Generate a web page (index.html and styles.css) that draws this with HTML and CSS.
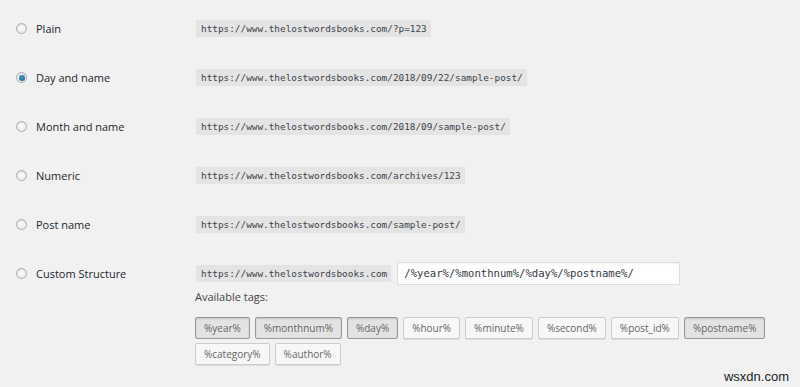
FILE: index.html
```html
<!DOCTYPE html>
<html lang="en">
<head>
<meta charset="utf-8">
<title>Permalink Settings</title>
<link rel="stylesheet" href="styles.css">
</head>
<body>
<div class="permalinks">
  <div class="row">
    <label class="choice"><span class="radio"></span><span class="label">Plain</span></label>
    <code class="url">https://www.thelostwordsbooks.com/?p=123</code>
  </div>
  <div class="row">
    <label class="choice"><span class="radio checked"></span><span class="label">Day and name</span></label>
    <code class="url">https://www.thelostwordsbooks.com/2018/09/22/sample-post/</code>
  </div>
  <div class="row">
    <label class="choice"><span class="radio"></span><span class="label">Month and name</span></label>
    <code class="url">https://www.thelostwordsbooks.com/2018/09/sample-post/</code>
  </div>
  <div class="row">
    <label class="choice"><span class="radio"></span><span class="label">Numeric</span></label>
    <code class="url">https://www.thelostwordsbooks.com/archives/123</code>
  </div>
  <div class="row">
    <label class="choice"><span class="radio"></span><span class="label">Post name</span></label>
    <code class="url">https://www.thelostwordsbooks.com/sample-post/</code>
  </div>
  <div class="row custom">
    <label class="choice custom-choice"><span class="radio"></span><span class="label">Custom Structure</span></label>
    <div class="custom-body">
      <div class="custom-line">
        <code class="url">https://www.thelostwordsbooks.com</code>
        <div class="structure">/%year%/%monthnum%/%day%/%postname%/</div>
      </div>
      <div class="avail">Available tags:</div>
      <ul class="tags">
        <li class="tag active">%year%</li>
        <li class="tag active">%monthnum%</li>
        <li class="tag active">%day%</li>
        <li class="tag">%hour%</li>
        <li class="tag">%minute%</li>
        <li class="tag">%second%</li>
        <li class="tag">%post_id%</li>
        <li class="tag active">%postname%</li>
        <li class="tag">%category%</li>
        <li class="tag">%author%</li>
      </ul>
    </div>
  </div>
</div>
<div class="watermark">wsxdn.com</div>
</body>
</html>
```

FILE: styles.css
```css
html, body {
  margin: 0;
  padding: 0;
}
body {
  background: #f1f1f1;
  width: 800px;
  height: 387px;
  overflow: hidden;
  position: relative;
  font-family: "Open Sans", "Noto Sans", sans-serif;
  color: #23282d;
}
.permalinks {
  padding-top: 4px;
}
.row {
  display: flex;
  align-items: center;
  height: 49px;
}
.choice {
  display: flex;
  align-items: center;
  width: 195px;
  flex: none;
}
.radio {
  width: 9px;
  height: 9px;
  margin-left: 16px;
  margin-right: 9px;
  border: 1px solid #a9adb1;
  border-radius: 50%;
  background: radial-gradient(circle at 50% 40%, #fbfbfb 0, #e6e6e6 100%);
  box-shadow: inset 0 1px 1px rgba(0,0,0,.1);
  display: flex;
  align-items: center;
  justify-content: center;
  box-sizing: content-box;
}
.radio.checked::after {
  content: "";
  width: 6px;
  height: 6px;
  border-radius: 50%;
  background: radial-gradient(circle at 45% 40%, #3d9bc9 0, #1a5f86 90%);
}
.label {
  font-size: 11px;
  line-height: 16px;
  color: #23282d;
}
.url {
  display: inline-block;
  font-family: "DejaVu Sans Mono", "Liberation Mono", monospace;
  font-size: 9.4px;
  line-height: 17px;
  height: 17px;
  padding: 0 4px 0 5px;
  margin-left: 1px;
  background: #e4e4e4;
  color: #3c434a;
}
.row.custom {
  align-items: flex-start;
  height: auto;
  padding-top: 13px;
}
.custom-choice {
  height: 23px;
}
.custom-line {
  display: flex;
  align-items: center;
  height: 23px;
}
.structure {
  margin-left: 6px;
  width: 269px;
  height: 21px;
  border: 1px solid #ddd;
  background: #fff;
  box-shadow: inset 0 1px 2px rgba(0,0,0,.05);
  font-family: "DejaVu Sans Mono", "Liberation Mono", monospace;
  font-size: 10.6px;
  line-height: 21px;
  padding: 0 6px;
  color: #32373c;
}
.avail {
  font-size: 11px;
  line-height: 16px;
  margin-top: 4px;
  color: #444;
}
.tags {
  list-style: none;
  margin: 12px 0 0;
  padding: 0;
  display: flex;
  flex-wrap: wrap;
  gap: 4px 5px;
  width: 600px;
}
.tag {
  height: 20px;
  line-height: 20px;
  padding: 0 8px;
  font-size: 10px;
  color: #666;
  background: #f7f7f7;
  border: 1px solid #ccc;
  border-radius: 2px;
  box-shadow: 0 1px 0 #ddd;
}
.tag.active {
  background: #e3e3e3;
  border-color: #999;
  box-shadow: inset 0 1px 2px rgba(0,0,0,.15);
}
.watermark {
  position: absolute;
  right: 11px;
  bottom: 3px;
  font-family: "Liberation Sans", Arial, sans-serif;
  font-size: 13px;
  color: #222;
}
```
